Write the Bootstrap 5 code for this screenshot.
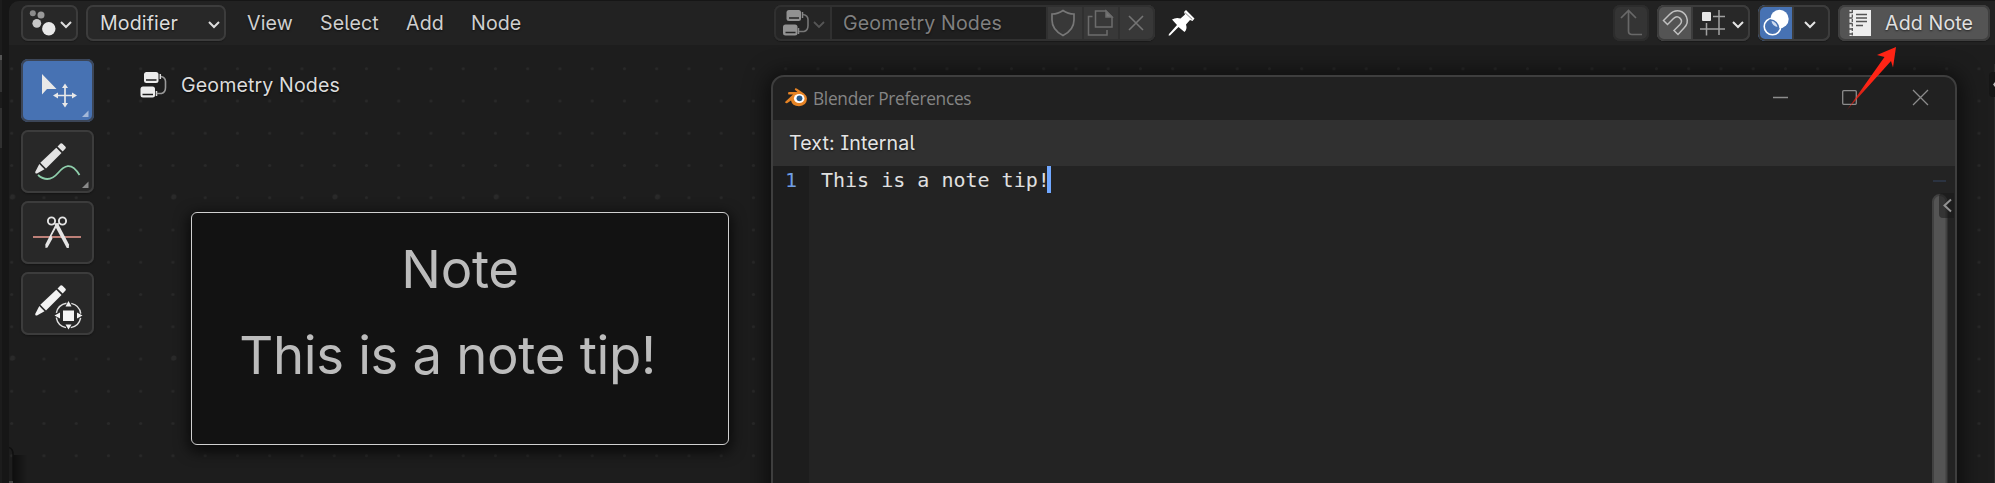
<!DOCTYPE html>
<html lang="en">
<head>
<meta charset="utf-8">
<title>Geometry Nodes</title>
<link href="https://cdn.jsdelivr.net/npm/bootstrap@5.3.0/dist/css/bootstrap.min.css" rel="stylesheet">
<style>
  body { background:#161616; font-family:Inter,"Liberation Sans",sans-serif; font-size:19.6px; line-height:36px; letter-spacing:.12px; color:#dcdcdc; font-feature-settings:"ss02","cv05","cv08"; height:483px; }
  svg { display:block; flex:none; }
  .edge-strip { width:2px; margin-right:7px; background:linear-gradient(#1c1c1c 0 55px,#555 55px 60px,#343434 60px 92px,#1c1c1c 92px 108px,#303030 108px 148px,#1c1c1c 148px); }
  .editor { margin-top:1px; border-top-left-radius:10px; background:#1d1d1d; }
  .editor-header { height:44px; padding:4px 5px 0 12px; background:#222; text-shadow:0 1px 2px #0009; }
  .ctl { height:36px; border-radius:7px; background:#282828; box-shadow:inset 0 0 0 2px #3c3c3c,0 1px 1px #0004; }
  .ctl-split { overflow:hidden; position:relative; }
  .ctl-split::after { content:""; position:absolute; inset:0; border:2px solid #3c3c3c; border-radius:7px; }
  .ctl-note { background:#545454; box-shadow:inset 0 0 0 2px #3f3f3f,0 1px 1px #0004; }
  .ctl-dim { color:#808080; }
  .ctl-dim::after { border-color:#303030; }
  .menu-text { color:#cfcfcf; }
  .seg-dim { background:#383838; border-left:2px solid #303030; width:36px; }
  .canvas { height:438px; }
  .tool { width:73px; height:63px; border-radius:7px; background:#282828; box-shadow:inset 0 0 0 2px #3c3c3c,0 1px 2px #0005; }
  .tool-on { background:#4772b3; box-shadow:inset 0 0 0 2px #3c4658; }
  .note { left:182px; top:211px; width:538px; height:233px; border:1.6px solid #d0d0d0; border-radius:6px; background:#121212; box-shadow:0 4px 14px 3px #000a; color:#bcbcbc; font-size:52.7px; line-height:86px; letter-spacing:-.33px; }
  .prefs { left:762px; top:74px; width:1186px; height:430px; border:2px solid #3e3e3e; border-radius:13px; background:#212121; box-shadow:0 2px 22px 4px #0009; }
  .prefs-title { height:43px; font-family:"Open Sans",sans-serif; font-size:17.3px; letter-spacing:-.3px; color:#858585; }
  .prefs-head { height:46px; background:#303030; padding-left:16px; line-height:46px; color:#e4e4e4; text-shadow:0 1px 2px #0008; }
  .code { background:#232323; height:340px; font-family:"DejaVu Sans Mono",monospace; font-size:20px; line-height:28px; letter-spacing:0; color:#e0e0e0; }
  .gutter { width:36px; background:#1d1d1d; color:#6f9ee4; padding-left:12px; }
  .caret { width:4px; height:27px; margin-left:-3px; background:#71a8ff; }
  .over { left:0; top:0; pointer-events:none; }
</style>
</head>
<body class="d-flex overflow-hidden m-0">
<div class="edge-strip flex-shrink-0"></div>
<main class="editor flex-grow-1 overflow-hidden position-relative">
  <header class="editor-header d-flex align-items-start">
    <div class="ctl" style="width:57px">
      <svg width="57" height="36" viewBox="21 5 57 36"><circle cx="32.8" cy="13.3" r="3" fill="#8b8b8b"/><circle cx="41" cy="15" r="3.5" fill="#999"/><circle cx="36.8" cy="23.3" r="4.4" fill="#c8c8c8"/><circle cx="48.8" cy="28.7" r="6.7" fill="#e8e8e8"/><path d="M61 22l5 5 5-5" fill="none" stroke="#ddd" stroke-width="2"/></svg>
    </div>
    <div class="ctl d-flex" style="width:140px;margin-left:8px;padding-left:14px">Modifier
      <svg class="ms-auto" width="24" height="36" viewBox="202 5 24 36"><path d="M209 22l5 5 5-5" fill="none" stroke="#ddd" stroke-width="2"/></svg>
    </div>
    <nav class="d-flex menu-text" style="margin-left:21px;width:527px">
      <span style="width:73px">View</span><span style="width:86px">Select</span><span style="width:65px">Add</span><span>Node</span>
    </nav>
    <div class="ctl ctl-split ctl-dim d-flex" style="width:381px;background:#1f1f1f">
      <svg width="56" height="36" viewBox="774 5 56 36"><path d="M774 5h56v36h-56z" fill="#252525"/><g fill="#929292"><rect x="786.5" y="10" width="14.5" height="11" rx="2.5"/><rect x="783" y="24.5" width="14.5" height="11" rx="2.5"/></g><path d="M789 18h10M785.500 32.500h10" stroke="#252525" stroke-width="1.300"/><path d="M802.500 12v6M798.500 28v6" stroke="#8a8a8a" stroke-width="1.500"/><path d="M803 14.500q5 1 5 5v6q0 5-4 6h-5" fill="none" stroke="#777" stroke-width="1.600"/><path d="M814 22l5 5 5-5" fill="none" stroke="#555" stroke-width="1.800"/></svg>
      <span style="width:216px;padding-left:11px;border-left:2px solid #303030">Geometry Nodes</span>
      <span class="seg-dim"><svg width="34" height="36" viewBox="1048 5 34 36" fill="none" stroke="#777" stroke-width="1.700"><path d="M1063 10.500q-5 3.500-11 3.500v6q0 10 11 15.500q11-5.500 11-15.500v-6q-6 0-11-3.500z"/></svg></span>
      <span class="seg-dim"><svg width="34" height="36" viewBox="1084 5 34 36" fill="none" stroke="#6c6c6c" stroke-width="1.500"><path d="M1106 11h-10.500v16h16.500v-10z"/><path d="M1106 11v6h6z" fill="#777"/><path d="M1092.500 16.500h-4v18.500h18.500v-5"/></svg></span>
      <span class="seg-dim" style="width:37px"><svg width="35" height="36" viewBox="1120 5 35 36" fill="none" stroke="#747474" stroke-width="1.600"><path d="M1129 16l14 14M1143 16l-14 14"/></svg></span>
    </div>
    <svg width="40" height="36" viewBox="1155 5 40 36"><path d="M1186 10L1194.500 18.500L1192.500 21L1190 20L1186 24.500Q1187.500 29 1184.500 32L1178.500 27L1170 35.500L1168.500 35.500L1169 34L1177 25L1172 19.500Q1176 17 1180.500 18.500L1185 14.500L1184 12Z" fill="#fff"/><path d="M1184.800 12.500l7.500 7" stroke="#555" stroke-width=".7"/></svg>
    <div class="ctl ms-auto" style="width:36px;background:#343434;box-shadow:inset 0 0 0 2px #2c2c2c">
      <svg width="36" height="36" viewBox="1613 5 36 36" fill="none" stroke="#686868" stroke-width="1.700"><path d="M1621 18l7.500-7.500 7.500 7.500M1628.500 11v20q0 3.500 3.500 3.500h10"/></svg>
    </div>
    <div class="ctl ctl-split d-flex" style="width:93px;margin-left:8px">
      <svg width="93" height="36" viewBox="1657 5 93 36" fill="none"><path d="M1657 5h35v36h-35z" fill="#545454"/><path d="M1663.500 20.500L1669.500 14.500C1676 8 1684 11 1686.500 17C1688.500 22 1687 25 1684 28L1678 34.500L1674 30.500L1680 24.500C1684 20 1678 14 1673.500 18.500L1667.500 24.500Z" stroke="#c0c0c0" stroke-width="1.500"/><path d="M1692 5v36" stroke="#3c3c3c" stroke-width="2"/><path d="M1706.500 23v12.500M1719 10v25M1700 29h25M1713 16.500h12" stroke="#a0a0a0" stroke-width="1.500"/><rect x="1702" y="12" width="9" height="9" rx="1" fill="#e6e6e6"/><path d="M1733 22l5 5 5-5" stroke="#e4e4e4" stroke-width="2"/></svg>
    </div>
    <div class="ctl ctl-split d-flex" style="width:72px;margin-left:8px">
      <svg width="72" height="36" viewBox="1758 5 72 36" fill="none"><path d="M1758 5h35v36h-35z" fill="#4772b3"/><circle cx="1779.500" cy="19" r="9.200" fill="#fff"/><circle cx="1772.500" cy="26.500" r="8.300" stroke="#fff" stroke-width="1.600"/><path d="M1770.500 20a9.200 9.200 0 0 0 8 8a8.300 8.300 0 0 0-8-8z" fill="#cfdcf0" stroke="#4772b3" stroke-width="1.500"/><path d="M1793 5v36" stroke="#3c3c3c" stroke-width="2"/><path d="M1805 22l5 5 5-5" stroke="#e4e4e4" stroke-width="2"/></svg>
    </div>
    <div class="ctl ctl-note d-flex" style="width:152px;margin-left:8px;color:#e0e0e0">
      <svg width="47" height="36" viewBox="1838 5 47 36"><path d="M1849.500 10H1871V36H1849.500z" fill="#ededed"/><path d="M1852.300 10v26" stroke="#545454" stroke-width="1.300" stroke-dasharray="3 1.500"/><path d="M1848.500 12.500h4M1848.500 18h4M1848.500 23.500h4M1848.500 29h4M1848.500 34h4" stroke="#545454" stroke-width="1.500"/><path d="M1856 14.500h11M1856 18h11M1856 21.500h11M1856 25.500h7" stroke="#545454" stroke-width="1.300"/></svg>Add Note
    </div>
  </header>

  <section class="canvas d-flex">
    <svg class="position-absolute over" width="1986" height="482" viewBox="9 1 1986 482">
      <defs>
        <pattern id="grid" x="-4.400" y="52.600" width="32.250" height="32.250" patternUnits="userSpaceOnUse"><circle cx="16.100" cy="16.100" r="1.500" fill="#292929"/></pattern>
        <pattern id="grid-major" x="-68" y="116.100" width="161.250" height="161.250" patternUnits="userSpaceOnUse"><circle cx="80.600" cy="80.600" r="2.500" fill="#2a2a2a"/></pattern>
        <linearGradient id="leftfade"><stop stop-color="#000" stop-opacity=".5"/><stop offset="1" stop-color="#000" stop-opacity="0"/></linearGradient>
      </defs>
      <path d="M9 60h1986v423H9z" fill="url(#grid)"/><path d="M9 60h1986v423H9z" fill="url(#grid-major)"/>
      <path d="M13 455h15v28h-15z" fill="url(#leftfade)"/>
      <path d="M9 447.500q4 1 4 7v29" fill="none" stroke="#101010" stroke-width="1.500"/><path d="M9 481h4v2h-4z" fill="#444"/>
      <path d="M1994.500 64v419" stroke="#2a2a2a"/><rect x="1989" y="72" width="12" height="25" rx="4" fill="#161616"/><path d="M1996 82l-2 2.500 2 2.500" fill="none" stroke="#bbb" stroke-width="1.500"/>
    </svg>
    <aside class="d-flex flex-column gap-2 position-relative" style="padding:14px 0 0 12px">
      <div class="tool tool-on"><svg width="73" height="63" viewBox="21 59 73 63"><path d="M42 74v20.500l5-5.500h9.500z" fill="#e8e8e8"/><path d="M57 95.500h16M65 87v17" stroke="#e8e8e8" stroke-width="1.700"/><path d="M65 83.500l3 4.500h-6zM65 107.500l3-4.500h-6zM53 95.500l5-3v6zM77 95.500l-5-3v6z" fill="#e8e8e8"/><path d="M88.500 110.500v6.500h-6.500z" fill="#a3b8d9"/></svg></div>
      <div class="tool"><svg width="73" height="63" viewBox="21 130 73 63"><g fill="#e4e4e4"><path d="M57.500 146.500l3-3q1-.8 2 .2l3 3q.8 1 0 1.800l-2.800 3z"/><path d="M56.300 147.700l5.200 5.200-15.500 15.500-5.700-5.700z"/><path d="M39.300 164l5.200 5.200-7.500 4.300q-2 .5-1.800-1.500z"/></g><path d="M38 175C45 181 52 180 58 173S71 161 79.500 175" fill="none" stroke="#8fcfac" stroke-width="1.800"/><path d="M88.500 181.500v6.500h-6.500z" fill="#8a8a8a"/></svg></div>
      <div class="tool"><svg width="73" height="63" viewBox="21 201 73 63"><path d="M33 237h48" stroke="#bd8078" stroke-width="2.200"/><g fill="none" stroke="#e4e4e4" stroke-width="1.900"><circle cx="51.500" cy="221" r="3.600"/><circle cx="62.500" cy="221" r="3.600"/></g><path d="M54 223l4 .5 11 21-.2 3.500-2 0L56 228z" fill="#e4e4e4"/><path d="M60 223l-4 .5-10.700 21 .2 3.500 2-.5 5-9-1-2.500 5-9z" fill="#e4e4e4"/></svg></div>
      <div class="tool"><svg width="73" height="63" viewBox="21 272 73 63"><g fill="#f2f2f2"><path d="M57.500 288.500l3-3q1-.8 2 .2l3 3q.8 1 0 1.800l-2.800 3z"/><path d="M56.300 289.700l5.200 5.200-15.500 15.500-5.700-5.700z"/><path d="M39.300 306l5.200 5.200-7.500 4.300q-2 .5-1.800-1.500z"/><path d="M63 310.500h11v10.500h-11z"/><path d="M68.500 301l3 5.500h-6zM68.500 329.500l3-5h-6zM54.500 315.500l5.500-3v6zM82.500 315.500l-5.500-3v6z"/></g><circle cx="68.500" cy="315.500" r="12.400" fill="none" stroke="#e0e0e0" stroke-width="1.400" stroke-dasharray="14.480 5" stroke-dashoffset="-2.500"/></svg></div>
    </aside>
    <div class="d-flex position-relative" style="margin:22px 0 0 46px;height:36px;text-shadow:0 1px 2px #000c">
      <svg width="41" height="36" viewBox="140 67 41 36"><g fill="#ececec"><rect x="144" y="72" width="14.500" height="11" rx="2.500"/><rect x="140.500" y="86.500" width="14.500" height="11" rx="2.500"/></g><path d="M146 80h10.500M142.500 94.500H153" stroke="#1d1d1d" stroke-width="1.300"/><path d="M160.300 74v5M156.500 91v5" stroke="#ddd" stroke-width="1.500"/><path d="M161 76.500q4.500 1 4.500 5v6q0 5-4 6h-5" fill="none" stroke="#999" stroke-width="1.600"/></svg>Geometry Nodes
    </div>

    <article class="note position-absolute text-center"><div style="padding-top:13px">Note</div><div style="padding-right:25px">This is a note tip!</div></article>

    <section class="prefs position-absolute overflow-hidden">
      <div class="prefs-title d-flex align-items-center">
        <svg width="40" height="43" viewBox="773 77 40 43"><path d="M795 88.600Q796 87.900 797.500 89L804 93.500Q807 95.800 807 98.800Q806.500 106 799 106.200Q792 106 791 100.500L787 103.200Q785.500 103.500 785 102L793 94.600H788.500Q787.500 93.500 788.500 92H797.500L794.800 89.800Z" fill="#e58325"/><ellipse cx="799.200" cy="98.500" rx="5.300" ry="4.600" fill="#fff"/><circle cx="799.500" cy="98.300" r="2.900" fill="#265787"/></svg>
        <span>Blender Preferences</span>
        <svg class="ms-auto" width="182" height="43" viewBox="1773 77 182 43" fill="none" stroke="#8c8c8c" stroke-width="1.300"><path d="M1773 97.500h15"/><rect x="1842.700" y="90.700" width="13.600" height="13.600" rx="1"/><path d="M1913 90l15 15M1928 90l-15 15"/></svg>
      </div>
      <div class="prefs-head">Text: Internal</div>
      <div class="code d-flex"><div class="gutter">1</div><div style="padding-left:12px">This is a note tip!</div><div class="caret"></div>
        <svg class="ms-auto" width="24" height="317" viewBox="1931 166 24 317"><path d="M1933 181h13" stroke="#2b3341" stroke-width="2"/><rect x="1933" y="195" width="13.500" height="310" rx="6.700" fill="#545454" stroke="#414141" stroke-width="2"/><path d="M1954 193h-11q-4 0-4 4v17q0 4 4 4h11z" fill="#1a1a1a" fill-opacity=".55"/><path d="M1951 199.500l-6.500 6 6.500 6" fill="none" stroke="#929292" stroke-width="2"/></svg>
      </div>
    </section>
  </section>
  <svg class="position-absolute over" width="1986" height="482" viewBox="9 1 1986 482">
    <defs><linearGradient id="arrow" gradientUnits="userSpaceOnUse" x1="1847" y1="109" x2="1866" y2="84"><stop stop-color="#ff2415" stop-opacity=".5"/><stop offset="1" stop-color="#ff2415"/></linearGradient></defs>
    <path d="M1896 47L1877 55L1884.500 57L1847 110L1891 61L1893 67.500Z" fill="url(#arrow)"/>
  </svg>
</main>
<script src="https://cdn.jsdelivr.net/npm/bootstrap@5.3.0/dist/js/bootstrap.bundle.min.js"></script>
</body>
</html>
